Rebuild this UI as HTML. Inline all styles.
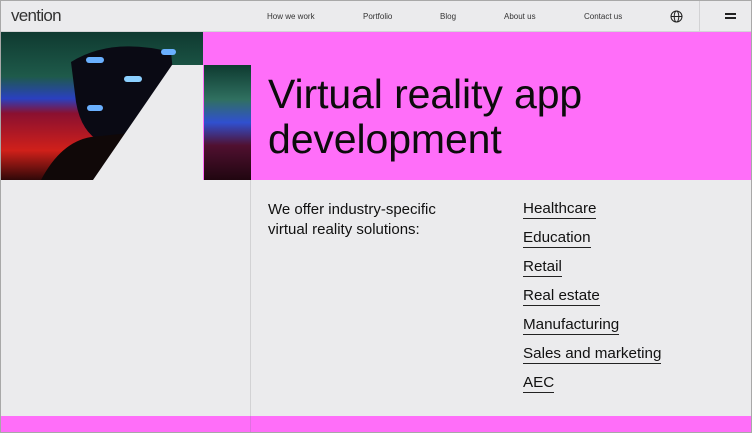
<!DOCTYPE html>
<html><head><meta charset="utf-8"><style>
*{margin:0;padding:0;box-sizing:border-box}
body{width:752px;height:433px;overflow:hidden;background:#ebebed;font-family:"Liberation Sans",sans-serif;color:#111;position:relative}
.frame{position:absolute;inset:0;border:1px solid #a8a8a8;pointer-events:none;z-index:9}
.hdr{position:absolute;left:0;top:0;width:752px;height:32px;border-bottom:1px solid #d4d4d6}
.logo{position:absolute;left:11px;top:6px;font-size:17px;letter-spacing:-0.7px;color:#333}
.nav{position:absolute;top:12px;font-size:8px;color:#333}
.vl{position:absolute;background:#d2d2d4;width:1px}
.pink{background:#ff6ef9;position:absolute}
h1{position:absolute;left:268px;top:72px;font-size:41px;font-weight:normal;line-height:45px;letter-spacing:-0.1px;color:#0c0c0c}
.intro{position:absolute;left:268px;top:200px;font-size:15px;line-height:20px}
.list{position:absolute;left:523px;top:200px}
.list div{font-size:15.2px;height:29px;line-height:18px}
.list span{border-bottom:1.5px solid #222;padding-bottom:1px}
</style></head><body>
<div class="hdr">
<div class="logo">vention</div>
<div class="nav" style="left:267px">How we work</div>
<div class="nav" style="left:363px">Portfolio</div>
<div class="nav" style="left:440px">Blog</div>
<div class="nav" style="left:504px">About us</div>
<div class="nav" style="left:584px">Contact us</div>
<svg style="position:absolute;left:670px;top:10px" width="13" height="13" viewBox="0 0 13 13" fill="none" stroke="#222" stroke-width="1"><circle cx="6.5" cy="6.5" r="5.5"/><ellipse cx="6.5" cy="6.5" rx="2.3" ry="5.5"/><path d="M1 6.5h11"/></svg>
<div style="position:absolute;left:725px;top:13px;width:11px;height:2px;background:#222"></div>
<div style="position:absolute;left:725px;top:17px;width:11px;height:2px;background:#222"></div>
</div>
<div class="vl" style="left:699px;top:0;height:32px"></div>
<div class="pink" style="left:203px;top:32px;width:548px;height:148px"></div>
<svg style="position:absolute;left:1px;top:32px" width="250" height="148" viewBox="0 0 250 148">
<defs>
<linearGradient id="g1" x1="0" y1="0" x2="0" y2="1"><stop offset="0" stop-color="#0f3a30"/><stop offset=".3" stop-color="#1e5a4a"/><stop offset=".45" stop-color="#2a40c0"/><stop offset=".55" stop-color="#8a1030"/><stop offset=".8" stop-color="#d0201a"/><stop offset="1" stop-color="#300808"/></linearGradient>
<linearGradient id="g2" x1="0" y1="0" x2="0" y2="1"><stop offset="0" stop-color="#0e3a30"/><stop offset=".3" stop-color="#307060"/><stop offset=".5" stop-color="#3050d0"/><stop offset=".7" stop-color="#501030"/><stop offset="1" stop-color="#200610"/></linearGradient>
</defs>
<rect width="202" height="148" fill="url(#g1)"/>
<path d="M70 30 Q110 5 170 20 L175 70 Q140 110 100 110 Q80 100 75 70Z" fill="#0a0a14"/>
<path d="M40 148 Q60 110 90 105 L140 100 L160 148Z" fill="#100808"/>
<rect x="85" y="25" width="18" height="6" rx="3" fill="#6ab0ff"/>
<rect x="160" y="17" width="15" height="6" rx="3" fill="#6ab0ff"/>
<rect x="123" y="44" width="18" height="6" rx="3" fill="#8cd0ff"/>
<rect x="86" y="73" width="16" height="6" rx="3" fill="#6ab0ff"/>
<path d="M92 148 L171 33 L202 33 L202 148Z" fill="#ebebed"/>
<rect x="203" y="33" width="47" height="115" fill="url(#g2)"/>
</svg>
<h1>Virtual reality app<br>development</h1>
<div class="vl" style="left:250px;top:180px;height:253px"></div>
<div class="intro">We offer industry-specific<br>virtual reality solutions:</div>
<div class="list">
<div><span>Healthcare</span></div>
<div><span>Education</span></div>
<div><span>Retail</span></div>
<div><span>Real estate</span></div>
<div><span>Manufacturing</span></div>
<div><span>Sales and marketing</span></div>
<div><span>AEC</span></div>
</div>
<div class="pink" style="left:0;top:416px;width:752px;height:17px"></div>
<div class="vl" style="left:250px;top:416px;height:17px;background:#e070e0"></div>
<div class="frame"></div>
</body></html>
